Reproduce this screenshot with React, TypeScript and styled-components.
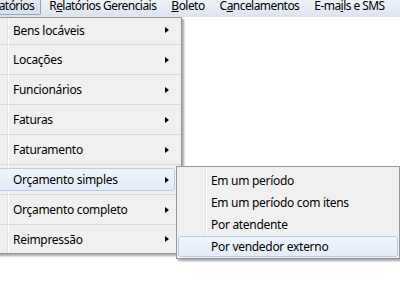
import React from "react";
import styled, { createGlobalStyle } from "styled-components";

const Global = createGlobalStyle`
  html, body { margin: 0; padding: 0; background: #ffffff; overflow: hidden; }
  body { width: 400px; height: 300px; font-family: "Noto Sans", "Open Sans", sans-serif; font-size: 12px; letter-spacing: -0.3px; color: #000; }
`;

const Screen = styled.div`
  position: relative;
  width: 400px;
  height: 300px;
  overflow: hidden;
  background: #fff;
`;

const MenuBar = styled.div`
  display: flex;
  align-items: flex-start;
  height: 17px;
  background: linear-gradient(to bottom, #eef2f8 0%, #e4eaf3 60%, #dbe3ef 100%);
  position: relative;
  z-index: 2;
`;

const BarItem = styled.div<{ $pressed?: boolean; $shift?: number }>`
  box-sizing: border-box;
  height: 15px;
  line-height: 12px;
  padding: 0 6px 0 7px;
  margin-left: ${(p) => (p.$shift ? `${p.$shift}px` : "0")};
  letter-spacing: -0.55px;
  white-space: nowrap;
  border: 1px solid ${(p) => (p.$pressed ? "#95a5bb" : "transparent")};
  border-top: none;
  border-radius: 0 0 2px 2px;
  background: ${(p) =>
    p.$pressed ? "linear-gradient(to bottom, #e3e9f2, #d6dfeb)" : "transparent"};
  box-shadow: ${(p) => (p.$pressed ? "inset 1px 0 0 rgba(255,255,255,0.5)" : "none")};
  u { text-decoration: underline; text-underline-offset: 1px; }
`;

const Menu = styled.div<{ $left: number; $top: number; $width: number }>`
  position: absolute;
  left: ${(p) => p.$left}px;
  top: ${(p) => p.$top}px;
  width: ${(p) => p.$width}px;
  box-sizing: border-box;
  border: 1px solid #979797;
  background: #f0f0f0;
  box-shadow: 2px 2px 2px rgba(0, 0, 0, 0.35);
  display: flex;
  flex-direction: column;
  z-index: 3;
  &::before {
    content: "";
    position: absolute;
    top: 0;
    bottom: 0;
    left: 28px;
    width: 1px;
    background: #e2e3e3;
    box-shadow: 1px 0 0 #ffffff;
  }
`;

const SubMenu = styled(Menu)`
  padding: 2px 0 1px;
  z-index: 4;
`;

const Row = styled.div<{ $hover?: boolean; $sep?: boolean }>`
  position: relative;
  box-sizing: border-box;
  height: 30px;
  display: flex;
  align-items: center;
  padding-left: 34px;
  padding-right: 12px;
  white-space: nowrap;
  border-bottom: ${(p) => (p.$sep ? "1px solid #dadada" : "none")};
  &:first-child { height: 27px; padding-bottom: 2px; }
  &:last-child { height: 28px; }
  &::after {
    content: "";
    display: ${(p) => (p.$hover ? "block" : "none")};
    position: absolute;
    left: -2px;
    right: 6px;
    top: 3px;
    bottom: 3px;
    border: 1px solid #b9cde8;
    border-radius: 3px;
    background: linear-gradient(to bottom, rgba(240,245,252,0.9), rgba(225,234,247,0.9));
    z-index: 0;
  }
`;

const SubRow = styled.div<{ $hover?: boolean }>`
  position: relative;
  box-sizing: border-box;
  height: 22px;
  display: flex;
  align-items: center;
  padding-left: 34px;
  white-space: nowrap;
  &::after {
    content: "";
    display: ${(p) => (p.$hover ? "block" : "none")};
    position: absolute;
    left: 1px;
    right: 1px;
    top: 1px;
    bottom: 0px;
    border: 1px solid #b4cbea;
    border-radius: 3px;
    background: linear-gradient(to bottom, #f1f5fc, #e3ecf8);
    z-index: 0;
  }
`;

const Label = styled.span`
  position: relative;
  z-index: 1;
  flex: 1;
`;

const Arrow = styled.span`
  position: relative;
  z-index: 1;
  width: 0;
  height: 0;
  border-top: 3.5px solid transparent;
  border-bottom: 3.5px solid transparent;
  border-left: 4px solid #000;
`;

const mainItems = [
  "Bens locáveis",
  "Locações",
  "Funcionários",
  "Faturas",
  "Faturamento",
  "Orçamento simples",
  "Orçamento completo",
  "Reimpressão",
];

const subItems = [
  "Em um período",
  "Em um período com itens",
  "Por atendente",
  "Por vendedor externo",
];

export default function App() {
  return (
    <Screen>
      <Global />
      <MenuBar>
        <BarItem $pressed $shift={-25}>Relatórios</BarItem>
        <BarItem>
          R<u>e</u>latórios Gerenciais
        </BarItem>
        <BarItem>
          <u>B</u>oleto
        </BarItem>
        <BarItem>
          C<u>a</u>ncelamentos
        </BarItem>
        <BarItem>
          E-ma<u>i</u>ls e SMS
        </BarItem>
      </MenuBar>
      <Menu $left={-22} $top={17} $width={204}>
        {mainItems.map((t, i) => (
          <Row key={t} $sep={i < mainItems.length - 1} $hover={i === 5}>
            <Label>{t}</Label>
            <Arrow />
          </Row>
        ))}
      </Menu>
      <SubMenu $left={176} $top={166} $width={224}>
        {subItems.map((t, i) => (
          <SubRow key={t} $hover={i === 3}>
            <Label>{t}</Label>
          </SubRow>
        ))}
      </SubMenu>
    </Screen>
  );
}
